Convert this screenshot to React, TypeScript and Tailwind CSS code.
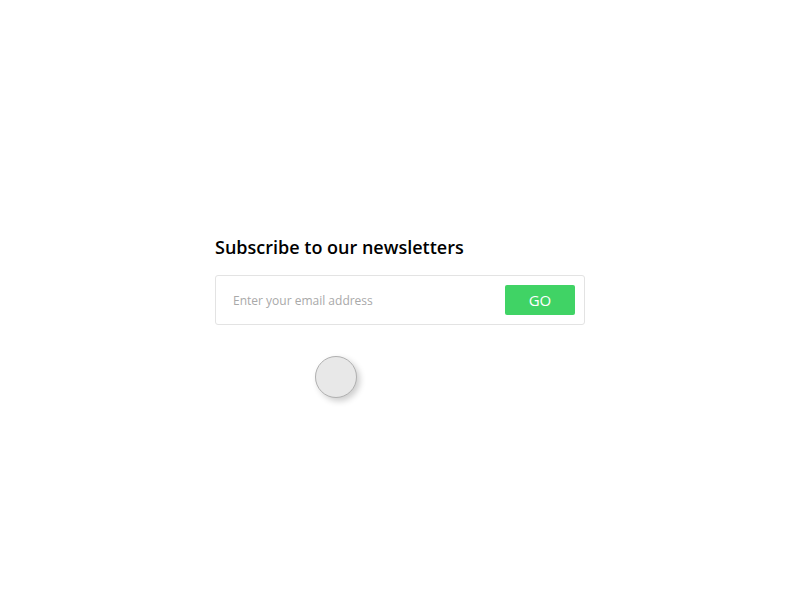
import React from 'react';

const App: React.FC = () => {
  return (
    <div className="min-h-[600px] w-full bg-white" style={{ fontFamily: '"Open Sans", sans-serif' }}>
      <div className="mx-auto w-[370px] pt-[235px]">
        <h2 className="text-[18px] font-semibold leading-[25px] text-black">Subscribe to our newsletters</h2>
        <div className="mt-[15px] flex h-[50px] items-center rounded-[3px] border border-[#e3e3e3] pl-[17px] pr-[9px]">
          <input
            type="email"
            placeholder="Enter your email address"
            className="mt-[1px] flex-1 bg-transparent text-[12px] text-[#333] outline-none placeholder:text-[#a9a9a9]"
          />
          <button className="h-[30px] w-[70px] rounded-[2px] bg-[#40d365] text-[15px] font-normal text-white">GO</button>
        </div>
        <div className="ml-[100px] mt-[31px] h-[42px] w-[42px] rounded-full border border-[#b0b0b0] bg-[#e8e8e8] shadow-[3px_3px_6px_rgba(0,0,0,0.2)]" />
      </div>
    </div>
  );
};

export default App;
